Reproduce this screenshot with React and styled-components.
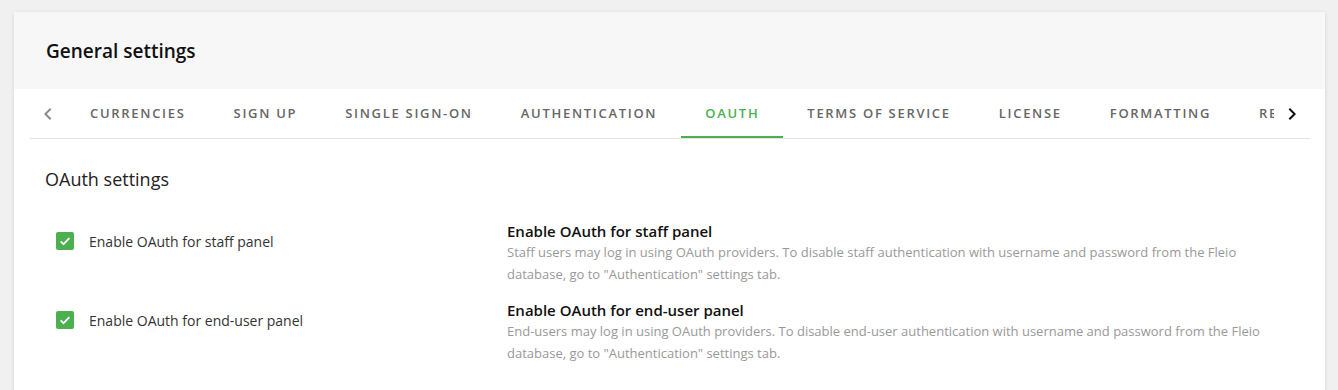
import React, { useState } from 'react';
import styled, { createGlobalStyle } from 'styled-components';

const GlobalStyle = createGlobalStyle`
  body {
    margin: 0;
    background: #f0f0f0;
    font-family: "Open Sans", "Liberation Sans", sans-serif;
    color: #222;
  }
`;

const Page = styled.div`
  padding: 12px 13px 0 14px;
  height: 390px;
  box-sizing: border-box;
  overflow: hidden;
`;

const Card = styled.div`
  background: #fff;
  box-shadow: 0 1px 4px rgba(0, 0, 0, 0.12);
  min-height: 400px;
`;

const CardHeader = styled.div`
  height: 77px;
  background: #f7f7f7;
  display: flex;
  align-items: center;
  padding: 0 32px;
`;

const CardTitle = styled.h2`
  margin: 0;
  font-size: 19px;
  font-weight: 600;
  color: #111;
`;

const TabBar = styled.div`
  display: flex;
  align-items: stretch;
  height: 49px;
  margin: 0 15px 0 16px;
  border-bottom: 1px solid #e3e3e3;
`;

const ArrowButton = styled.button`
  flex: 0 0 36px;
  border: none;
  background: none;
  padding: 0;
  display: flex;
  align-items: center;
  justify-content: center;
  color: ${(props) => (props.dim ? '#8a8a8a' : '#111')};
  cursor: pointer;
`;

const TabScroller = styled.div`
  flex: 1;
  overflow: hidden;
  display: flex;
`;

const Tab = styled.div`
  flex: 0 0 auto;
  padding: 0 24px;
  display: flex;
  align-items: center;
  font-size: 13px;
  font-weight: 600;
  letter-spacing: 1.7px;
  text-transform: uppercase;
  color: ${(props) => (props.active ? '#4caf50' : '#666')};
  border-bottom: 2px solid ${(props) => (props.active ? '#4caf50' : 'transparent')};
  box-sizing: border-box;
  cursor: pointer;
`;

const Content = styled.div`
  padding: 28px 31px 0 31px;
`;

const SectionTitle = styled.h3`
  margin: 0 0 30px;
  font-size: 18px;
  line-height: 24px;
  font-weight: 400;
  color: #222;
`;

const SettingRow = styled.div`
  display: grid;
  grid-template-columns: 462px 1fr;
  margin-bottom: 15px;
`;

const CheckLabel = styled.label`
  display: flex;
  align-items: center;
  height: 40px;
  padding-left: 11px;
  gap: 15px;
  font-size: 14px;
  color: #333;
  cursor: pointer;
`;

const Box = styled.span`
  width: 18px;
  height: 18px;
  border-radius: 2px;
  background: ${(props) => (props.checked ? '#4caf50' : '#fff')};
  border: ${(props) => (props.checked ? 'none' : '2px solid #777')};
  box-sizing: border-box;
  display: flex;
  align-items: center;
  justify-content: center;
`;

const HelpTitle = styled.div`
  font-size: 15px;
  line-height: 20px;
  font-weight: 600;
  color: #111;
`;

const HelpText = styled.div`
  font-size: 13px;
  line-height: 22px;
  color: #999;
`;

const tabs = [
  'Currencies',
  'Sign up',
  'Single sign-on',
  'Authentication',
  'OAuth',
  'Terms of service',
  'License',
  'Formatting',
  'Reports',
];

const settings = [
  {
    key: 'staff',
    label: 'Enable OAuth for staff panel',
    help:
      'Staff users may log in using OAuth providers. To disable staff authentication with username and password from the Fleio database, go to "Authentication" settings tab.',
  },
  {
    key: 'enduser',
    label: 'Enable OAuth for end-user panel',
    help:
      'End-users may log in using OAuth providers. To disable end-user authentication with username and password from the Fleio database, go to "Authentication" settings tab.',
  },
];

const Chevron = ({ dir }) => (
  <svg width="24" height="24" viewBox="0 0 24 24" fill="currentColor">
    {dir === 'left' ? (
      <path d="M15.41 7.41 14 6l-6 6 6 6 1.41-1.41L10.83 12z" />
    ) : (
      <path d="M8.59 16.59 10 18l6-6-6-6-1.41 1.41L13.17 12z" />
    )}
  </svg>
);

const App = () => {
  const [active, setActive] = useState('OAuth');
  const [checked, setChecked] = useState({ staff: true, enduser: true });

  return (
    <Page>
      <GlobalStyle />
      <Card>
        <CardHeader>
          <CardTitle>General settings</CardTitle>
        </CardHeader>
        <TabBar>
          <ArrowButton dim>
            <Chevron dir="left" />
          </ArrowButton>
          <TabScroller>
            {tabs.map((t) => (
              <Tab key={t} active={t === active} onClick={() => setActive(t)}>
                {t}
              </Tab>
            ))}
          </TabScroller>
          <ArrowButton>
            <Chevron dir="right" />
          </ArrowButton>
        </TabBar>
        <Content>
          <SectionTitle>OAuth settings</SectionTitle>
          {settings.map((s) => (
            <SettingRow key={s.key}>
              <div>
                <CheckLabel
                  onClick={() => setChecked({ ...checked, [s.key]: !checked[s.key] })}
                >
                  <Box checked={checked[s.key]}>
                    {checked[s.key] && (
                      <svg width="14" height="14" viewBox="0 0 24 24">
                        <path
                          d="M4.5 12.5l5 5L19.5 7"
                          fill="none"
                          stroke="#fff"
                          strokeWidth="3"
                        />
                      </svg>
                    )}
                  </Box>
                  {s.label}
                </CheckLabel>
              </div>
              <div>
                <HelpTitle>{s.label}</HelpTitle>
                <HelpText>{s.help}</HelpText>
              </div>
            </SettingRow>
          ))}
        </Content>
      </Card>
    </Page>
  );
};

export default App;
